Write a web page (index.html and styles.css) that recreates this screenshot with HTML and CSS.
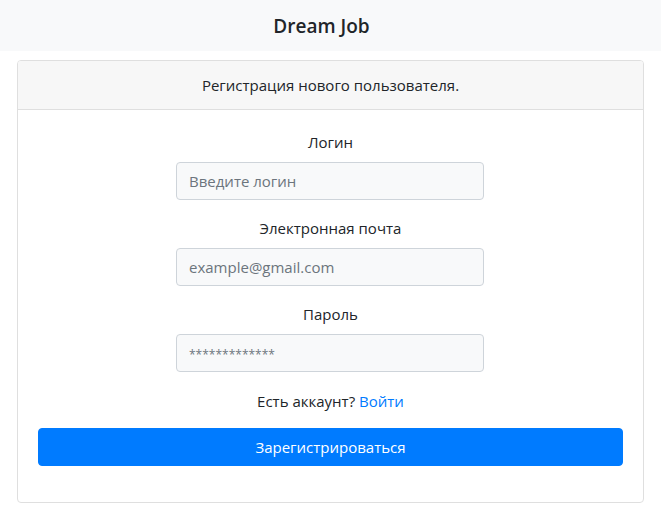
FILE: index.html
```html
<!DOCTYPE html>
<html lang="ru">
<head>
<meta charset="utf-8">
<title>Dream Job</title>
<link rel="stylesheet" href="styles.css">
</head>
<body>
<nav class="navbar"><span class="brand">Dream Job</span></nav>
<main class="card">
  <div class="card-header">Регистрация нового пользователя.</div>
  <form class="card-body">
    <div class="form-group">
      <label class="label" for="login">Логин</label>
      <input class="input" id="login" type="text" placeholder="Введите логин">
    </div>
    <div class="form-group">
      <label class="label" for="email">Электронная почта</label>
      <input class="input" id="email" type="email" placeholder="example@gmail.com">
    </div>
    <div class="form-group form-group-last">
      <label class="label" for="pass">Пароль</label>
      <input class="input input-pass" id="pass" type="password" placeholder="*************">
    </div>
    <p class="account">Есть аккаунт? <a class="link" href="#">Войти</a></p>
    <button class="btn" type="button">Зарегистрироваться</button>
  </form>
</main>
</body>
</html>
```
FILE: styles.css
```css
* { box-sizing: border-box; }
html, body { margin: 0; padding: 0; }
body {
  font-family: "Open Sans", "Noto Sans", sans-serif;
  font-size: 15px;
  line-height: 24px;
  color: #212529;
  background: #fff;
}
.navbar {
  height: 51px;
  background: #f8f9fa;
  display: flex;
  align-items: center;
  justify-content: center;
  padding-right: 18px;
}
.brand {
  font-size: 19px;
  font-weight: 600;
  line-height: 30px;
}
.card {
  display: block;
  margin: 9px 17px 0 17px;
  border: 1px solid #dfdfdf;
  border-radius: 4px;
}
.card-header {
  background: #f7f7f7;
  border-bottom: 1px solid #dfdfdf;
  padding: 12px 20px;
  text-align: center;
  border-radius: 3px 3px 0 0;
}
.card-body {
  padding: 20px 20px 36px;
  display: flex;
  flex-direction: column;
  align-items: center;
  margin: 0;
}
.form-group {
  display: flex;
  flex-direction: column;
  align-items: center;
  margin-bottom: 16px;
}
.form-group-last { margin-bottom: 17px; }
.label {
  display: block;
  margin-bottom: 8px;
}
.input {
  width: 308px;
  height: 38px;
  padding: 6px 12px;
  margin-right: 1px;
  font: inherit;
  color: #495057;
  background: #f8f9fa;
  border: 1px solid #ced4da;
  border-radius: 4px;
}
.input::placeholder { color: #6c757d; opacity: 1; }
.input-pass::placeholder { font-size: 12px; }
.account {
  margin: 0 0 15px;
}
.link { color: #007bff; text-decoration: none; }
.btn {
  width: 100%;
  height: 38px;
  font: inherit;
  color: #fff;
  background: #007bff;
  border: 1px solid #007bff;
  border-radius: 4px;
}
```
